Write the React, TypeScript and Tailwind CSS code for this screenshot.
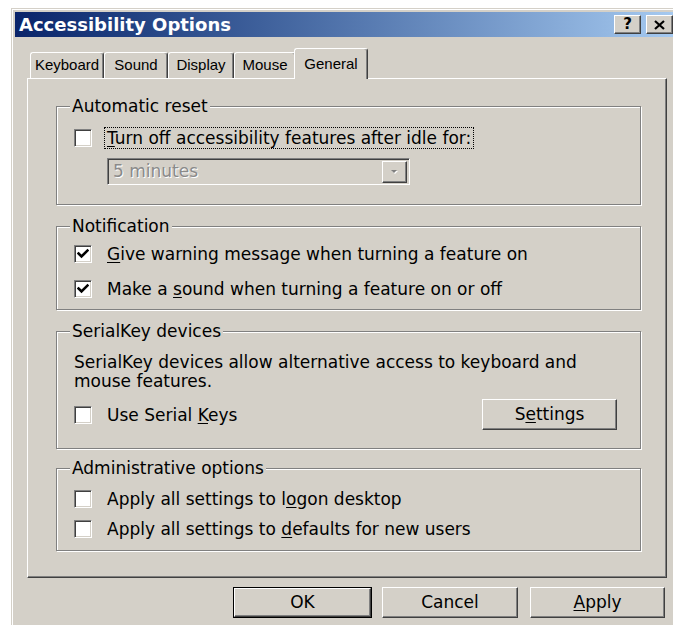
import React from 'react';

const body = "font-['DejaVu_Sans',sans-serif] text-[17px] text-black";

// Raised 3D edge used by buttons and the title-bar caption buttons
const raised =
  'border-t border-l border-t-white border-l-white border-r border-b border-r-[#404040] border-b-[#404040] shadow-[inset_-1px_-1px_0_#808080]';

const Mnemonic: React.FC<{ children: React.ReactNode }> = ({ children }) => (
  <span className="underline underline-offset-[2px] decoration-1">{children}</span>
);

const CheckBox: React.FC<{ checked?: boolean }> = ({ checked }) => (
  <div className="w-[18px] h-[18px] shrink-0 bg-white border-t border-l border-t-[#808080] border-l-[#808080] border-r border-b border-r-white border-b-white shadow-[inset_1px_1px_0_#404040,inset_-1px_-1px_0_#d4d0c8] flex items-center justify-center">
    {checked && (
      <svg width="12" height="12" viewBox="0 0 12 12">
        <path d="M1.5 5.5 L4.5 8.5 L10.5 2.5" fill="none" stroke="#000" strokeWidth="2.6" strokeLinecap="square" />
      </svg>
    )}
  </div>
);

const CheckRow: React.FC<{ checked?: boolean; focused?: boolean; children: React.ReactNode; className?: string }> = ({
  checked,
  focused,
  children,
  className = '',
}) => (
  <div className={`flex items-center h-[22px] ${className}`}>
    <CheckBox checked={checked} />
    <span
      className={`ml-[12px] px-[2px] leading-[20px] border ${
        focused ? 'border-dotted border-black' : 'border-transparent'
      }`}
    >
      {children}
    </span>
  </div>
);

const GroupBox: React.FC<{ title: string; className?: string; children: React.ReactNode }> = ({
  title,
  className = '',
  children,
}) => (
  <fieldset
    className={`border border-[#808080] shadow-[inset_1px_1px_0_#fff,1px_1px_0_#fff] px-[17px] ${className}`}
  >
    <legend className="-ml-[4px] px-[2px] leading-[20px] bg-[#d4d0c8]">{title}</legend>
    {children}
  </fieldset>
);

const PushButton: React.FC<{ width: string; isDefault?: boolean; children: React.ReactNode }> = ({
  width,
  isDefault,
  children,
}) => (
  <div className={`${width} h-[31px] ${isDefault ? 'border border-black' : ''} bg-[#d4d0c8]`}>
    <div className={`w-full h-full ${raised} flex items-center justify-center`}>{children}</div>
  </div>
);

const tabs = [
  { label: 'Keyboard', w: 'w-[74px]' },
  { label: 'Sound', w: 'w-[64px]' },
  { label: 'Display', w: 'w-[66px]' },
  { label: 'Mouse', w: 'w-[62px]' },
];

export default function App() {
  return (
    <div className="w-[673px] h-[625px] bg-white overflow-hidden">
      <div className="ml-[11px] mt-[8px] w-[668px] h-[640px] bg-[#d4d0c8] border-t border-l border-[#d4d0c8] shadow-[inset_1px_1px_0_#fff] pt-[3px] pl-[3px] pr-[4px]">
        {/* caption */}
        <div className="h-[25px] flex items-center bg-linear-to-r from-[#0a246a] to-[#a6caf0]">
          <span className="pl-[4px] font-['DejaVu_Sans',sans-serif] font-bold text-[18px] text-white leading-none">
            Accessibility Options
          </span>
          <div className="ml-auto flex gap-[5px] mr-[2px]">
            <div className={`w-[27px] h-[19px] bg-[#d4d0c8] ${raised} flex items-center justify-center font-['DejaVu_Sans',sans-serif] font-bold text-[15px] leading-none`}>
              ?
            </div>
            <div className={`w-[27px] h-[19px] bg-[#d4d0c8] ${raised} flex items-center justify-center`}>
              <svg width="11" height="10" viewBox="0 0 11 10">
                <path d="M1 1 L10 9 M10 1 L1 9" stroke="#000" strokeWidth="2.2" />
              </svg>
            </div>
          </div>
        </div>

        <div className={`ml-[12px] w-[640px] ${body}`}>
          {/* tab strip */}
          <div className="flex items-end h-[31px] mt-[11px] pl-[3px] -mb-px relative z-10 font-['Liberation_Sans',sans-serif] text-[15px]">
            {tabs.map((t) => (
              <div
                key={t.label}
                className={`${t.w} h-[26px] mb-px rounded-t-[3px] border-t border-l border-white border-r border-r-[#404040] shadow-[inset_-1px_0_0_#808080] flex items-center justify-center`}
              >
                {t.label}
              </div>
            ))}
            <div className="w-[74px] h-[31px] -ml-[2px] rounded-t-[3px] bg-[#d4d0c8] border-t border-l border-white border-r border-r-[#404040] shadow-[inset_-1px_0_0_#808080] flex items-start justify-center pt-[4px] relative">
              General
            </div>
          </div>

          {/* tab page */}
          <div className="h-[500px] border-t border-l border-white border-r border-b border-r-[#404040] border-b-[#404040] shadow-[inset_-1px_-1px_0_#808080] pt-[17px] pl-[28px] pr-[25px]">
            <GroupBox title="Automatic reset" className="h-[109px]">
              <CheckRow focused className="mt-[11px]">
                <Mnemonic>T</Mnemonic>urn off accessibility features after idle for:
              </CheckRow>
              <div className="ml-[33px] mt-[9px] w-[303px] h-[27px] border-t border-l border-t-[#808080] border-l-[#808080] border-r border-b border-r-white border-b-white shadow-[inset_1px_1px_0_#404040,inset_-1px_-1px_0_#d4d0c8] flex items-center">
                <span className="pl-[5px] text-[#8a8a8a] [text-shadow:1px_1px_0_#fff]">5 minutes</span>
                <div className={`ml-auto mr-[2px] w-[25px] h-[22px] ${raised} flex items-center justify-center`}>
                  <svg width="10" height="6" viewBox="0 0 10 6">
                    <path d="M2 2 L8 2 L5 5 Z" fill="#fff" />
                    <path d="M1 1 L7 1 L4 4 Z" fill="#808080" />
                  </svg>
                </div>
              </div>
            </GroupBox>

            <GroupBox title="Notification" className="h-[94px] mt-[11px]">
              <CheckRow checked className="mt-[7px]">
                <Mnemonic>G</Mnemonic>ive warning message when turning a feature on
              </CheckRow>
              <CheckRow checked className="mt-[13px]">
                Make a <Mnemonic>s</Mnemonic>ound when turning a feature on or off
              </CheckRow>
            </GroupBox>

            <GroupBox title="SerialKey devices" className="h-[128px] mt-[11px]">
              <p className="mt-[12px] leading-[19px]">
                SerialKey devices allow alternative access to keyboard and
                <br />
                mouse features.
              </p>
              <div className="flex items-center justify-between mt-[8px]">
                <CheckRow>
                  Use Serial <Mnemonic>K</Mnemonic>eys
                </CheckRow>
                <div className="mr-[6px]">
                  <PushButton width="w-[135px]">
                    S<Mnemonic>e</Mnemonic>ttings
                  </PushButton>
                </div>
              </div>
            </GroupBox>

            <GroupBox title="Administrative options" className="h-[93px] mt-[9px]">
              <CheckRow className="mt-[10px]">
                Apply all settings to l<Mnemonic>o</Mnemonic>gon desktop
              </CheckRow>
              <CheckRow className="mt-[8px]">
                Apply all settings to <Mnemonic>d</Mnemonic>efaults for new users
              </CheckRow>
            </GroupBox>
          </div>

          {/* dialog buttons */}
          <div className="flex justify-end mt-[9px] mr-[2px]">
            <PushButton width="w-[139px]" isDefault>
              OK
            </PushButton>
            <div className="ml-[10px]">
              <PushButton width="w-[136px]">Cancel</PushButton>
            </div>
            <div className="ml-[12px]">
              <PushButton width="w-[135px]">
                <Mnemonic>A</Mnemonic>pply
              </PushButton>
            </div>
          </div>
        </div>
      </div>
    </div>
  );
}
